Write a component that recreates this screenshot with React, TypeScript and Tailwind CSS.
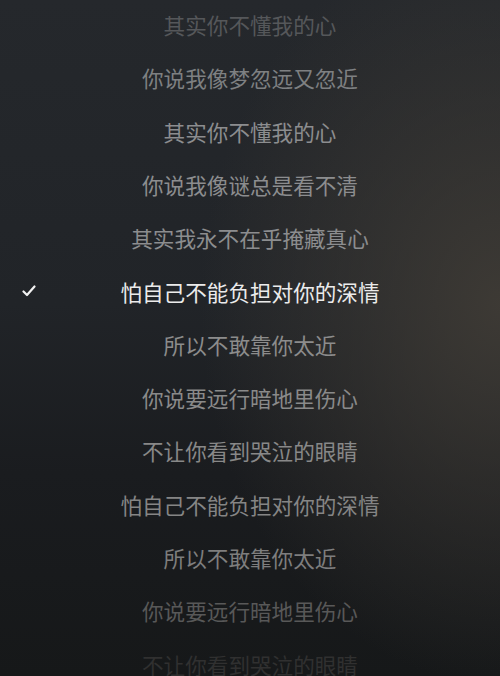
import React from "react";

const lyrics: { text: string; color: string }[] = [
  { text: "其实你不懂我的心", color: "text-[#55575a]" },
  { text: "你说我像梦忽远又忽近", color: "text-[#7e8082]" },
  { text: "其实你不懂我的心", color: "text-[#8c8d8f]" },
  { text: "你说我像谜总是看不清", color: "text-[#8c8d8f]" },
  { text: "其实我永不在乎掩藏真心", color: "text-[#8c8d8f]" },
  { text: "怕自己不能负担对你的深情", color: "text-[#ebebeb]" },
  { text: "所以不敢靠你太近", color: "text-[#8c8c8c]" },
  { text: "你说要远行暗地里伤心", color: "text-[#8a8a8a]" },
  { text: "不让你看到哭泣的眼睛", color: "text-[#888888]" },
  { text: "怕自己不能负担对你的深情", color: "text-[#858585]" },
  { text: "所以不敢靠你太近", color: "text-[#7e7e7e]" },
  { text: "你说要远行暗地里伤心", color: "text-[#585858]" },
  { text: "不让你看到哭泣的眼睛", color: "text-[#303030]" },
];

const CURRENT = 5;

export default function App() {
  return (
    <div className="relative h-[676px] w-[500px] overflow-hidden bg-[#1d2024] bg-[radial-gradient(ellipse_300px_380px_at_100%_45%,rgba(64,60,54,0.9),transparent),linear-gradient(180deg,#25282c_0%,#212428_45%,#1a1c1f_70%,#161819_100%)] font-['Noto_Sans_CJK_SC','Noto_Sans',sans-serif]">
      <div className="-mt-[2px] flex flex-col">
        {lyrics.map((line, i) => (
          <div key={i} className="relative flex h-[53.33px] items-center justify-center">
            {i === CURRENT && (
              <svg className="absolute left-[22px] top-[20px]" width="14" height="12" viewBox="0 0 14 12">
                <polyline points="1.5,6.5 5,10 12.5,1.5" fill="none" stroke="#f2f2f2" strokeWidth="2.2" strokeLinecap="round" strokeLinejoin="round" />
              </svg>
            )}
            <span className={`text-[21.6px] font-normal leading-none ${line.color}`}>{line.text}</span>
          </div>
        ))}
      </div>
    </div>
  );
}
